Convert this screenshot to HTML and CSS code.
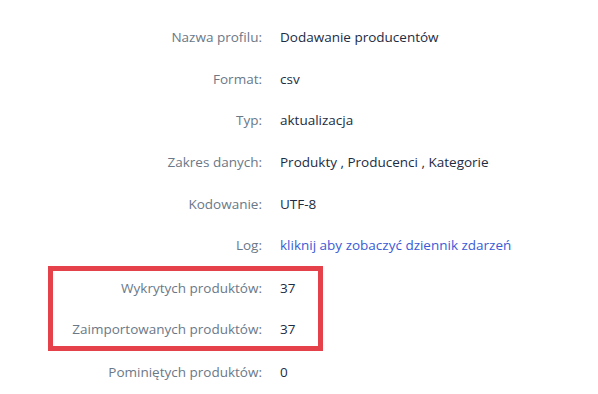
FILE: index.html
```html
<!DOCTYPE html>
<html lang="pl">
<head>
<meta charset="utf-8">
<link rel="stylesheet" href="styles.css">
</head>
<body>
<div class="details">
  <div class="row"><div class="label">Nazwa profilu:</div><div class="value">Dodawanie producentów</div></div>
  <div class="row"><div class="label">Format:</div><div class="value">csv</div></div>
  <div class="row"><div class="label">Typ:</div><div class="value">aktualizacja</div></div>
  <div class="row"><div class="label">Zakres danych:</div><div class="value">Produkty , Producenci , Kategorie</div></div>
  <div class="row"><div class="label">Kodowanie:</div><div class="value">UTF-8</div></div>
  <div class="row"><div class="label">Log:</div><div class="value"><a class="link" href="#">kliknij aby zobaczyć dziennik zdarzeń</a></div></div>
  <div class="highlight">
    <div class="row tight"><div class="label">Wykrytych produktów:</div><div class="value">37</div></div>
    <div class="row tight"><div class="label">Zaimportowanych produktów:</div><div class="value">37</div></div>
  </div>
  <div class="row"><div class="label">Pominiętych produktów:</div><div class="value">0</div></div>
</div>
</body>
</html>
```
FILE: styles.css
```css
html, body {
  margin: 0;
  padding: 0;
  background: #ffffff;
}
body {
  font-family: "Open Sans", "Noto Sans", sans-serif;
  font-size: 13.5px;
  line-height: 20px;
}
.details {
  padding-top: 16px;
  display: flex;
  flex-direction: column;
}
.row {
  display: flex;
  align-items: center;
  padding: 10.85px 0;
}
.label {
  width: 262px;
  flex: none;
  text-align: right;
  color: #6a7888;
}
.value {
  margin-left: 18px;
  color: #1c2c42;
}
.link {
  color: #3a5bd6;
  text-decoration: none;
}
.highlight {
  margin-left: 48px;
  width: 265px;
  border: 5px solid #e5414b;
  padding: 7px 0;
  display: flex;
  flex-direction: column;
  gap: 21px;
}
.highlight .row {
  padding: 0;
}
.highlight .label {
  width: 209px;
}
```
